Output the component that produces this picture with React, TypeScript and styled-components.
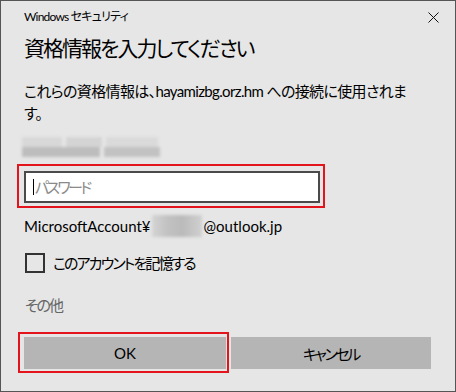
import React from "react";
import styled, { createGlobalStyle } from "styled-components";

const Global = createGlobalStyle`
  html, body { margin: 0; padding: 0; background: #e6e6e6; }
  * { box-sizing: border-box; }
  body {
    font-family: Lato, "Noto Sans CJK JP", sans-serif;
    color: #000;
  }
`;

const Window = styled.div`
  width: 456px;
  height: 392px;
  border: 1px solid #555;
  background: #e6e6e6;
  display: flex;
  flex-direction: column;
  font-feature-settings: "palt";
`;

const TitleBar = styled.div`
  height: 31px;
  display: flex;
  align-items: center;
  justify-content: space-between;
  padding-left: 23px;
`;

const TitleText = styled.span`
  font-size: 12px;
  line-height: 16px;
  margin-top: 1px;
  letter-spacing: -0.8px;
`;

const CloseButton = styled.div`
  width: 46px;
  height: 31px;
  display: flex;
  align-items: center;
  justify-content: center;
  padding-left: 2px;
  padding-top: 2px;
`;

const Content = styled.div`
  display: flex;
  flex-direction: column;
  align-items: flex-start;
  padding: 0 23px;
`;

const Heading = styled.h1`
  margin: 2px 0 0;
  font-size: 21px;
  line-height: 28px;
  font-weight: 400;
  letter-spacing: -2px;
`;

const Body = styled.p`
  margin: 18px 0 0;
  font-size: 15px;
  line-height: 22px;
  letter-spacing: -0.65px;
`;

const BlurBox = styled.div`
  margin-top: 13px;
  margin-left: -2px;
  width: 136px;
  height: 20px;
  display: grid;
  grid-template-rows: 10px 10px;
  filter: blur(1.5px);
`;

const BlurRow = styled.div`
  display: flex;
  gap: 4px;
`;

const BlurBlock = styled.div<{ $w: number; $c: string }>`
  width: ${(p) => p.$w}px;
  height: 100%;
  background: ${(p) => p.$c};
`;

const Highlight = styled.div<{ $pad: string; $ml: number; $mt: number }>`
  border: 2px solid #e3141c;
  padding: ${(p) => p.$pad};
  margin-left: ${(p) => p.$ml}px;
  margin-top: ${(p) => p.$mt}px;
`;

const Field = styled.div`
  width: 296px;
  height: 32px;
  border: 2px solid #4a4a4a;
  background: #fff;
  display: flex;
  align-items: center;
  padding-left: 7px;
`;

const Caret = styled.span`
  width: 1px;
  height: 16px;
  background: #000;
  margin-right: 1px;
`;

const Placeholder = styled.span`
  font-size: 15px;
  line-height: 20px;
  color: #8a8a8a;
  letter-spacing: -2.6px;
`;

const Account = styled.div`
  margin-top: 7px;
  font-size: 15px;
  line-height: 20px;
  display: flex;
  align-items: center;
`;

const AccountBlur = styled.span`
  display: inline-flex;
  width: 50px;
  height: 22px;
  margin: 0 2px 0 1px;
  filter: blur(1.5px);
  background: linear-gradient(90deg, #d4d4d4 0%, #c2c2c2 30%, #bababa 60%, #d0d0d0 100%);
`;

const CheckRow = styled.label`
  margin-top: 16px;
  display: flex;
  align-items: center;
  gap: 8px;
  font-size: 15px;
  line-height: 20px;
  margin-left: 1px;
  letter-spacing: -1.9px;
`;

const CheckBox = styled.span`
  width: 20px;
  height: 20px;
  border: 2px solid #333;
`;

const Other = styled.div`
  margin-top: 22px;
  margin-left: 1px;
  font-size: 15px;
  line-height: 20px;
  color: #666;
  letter-spacing: -2px;
`;

const ButtonRow = styled.div`
  align-self: stretch;
  display: flex;
  align-items: flex-start;
`;

const Button = styled.button<{ $w?: number }>`
  ${(p) => (p.$w ? `width: ${p.$w}px;` : "flex: 1;")}
  height: 32px;
  border: none;
  background: #b5b5b5;
  font-family: inherit;
  font-size: 15px;
  color: #000;
  padding: 0;
  font-feature-settings: "palt";
`;

const CancelButton = styled(Button)`
  margin-left: 2px;
  margin-top: 22px;
  margin-right: 1px;
  letter-spacing: -2.4px;
`;

export default function App() {
  return (
    <>
      <Global />
      <Window>
        <TitleBar>
          <TitleText>Windows セキュリティ</TitleText>
          <CloseButton>
            <svg width="11" height="11" viewBox="0 0 11 11">
              <path d="M0.5 0.5 L10.5 10.5 M10.5 0.5 L0.5 10.5" stroke="#111" strokeWidth="1" />
            </svg>
          </CloseButton>
        </TitleBar>
        <Content>
          <Heading>資格情報を入力してください</Heading>
          <Body>
            これらの資格情報は、hayamizbg.orz.hm への接続に使用されま
            <br />
            す。
          </Body>
          <BlurBox>
            <BlurRow>
              <BlurBlock $w={40} $c="#d8d8d8" />
              <BlurBlock $w={36} $c="#d4d4d4" />
              <BlurBlock $w={52} $c="#dadada" />
            </BlurRow>
            <BlurRow>
              <BlurBlock $w={78} $c="#bdbdbd" />
              <BlurBlock $w={56} $c="#c2c2c2" />
            </BlurRow>
          </BlurBox>
          <Highlight $pad="5px 3px 3px 5px" $ml={-7} $mt={7}>
            <Field>
              <Caret />
              <Placeholder>パスワード</Placeholder>
            </Field>
          </Highlight>
          <Account>
            MicrosoftAccount¥
            <AccountBlur />
            @outlook.jp
          </Account>
          <CheckRow>
            <CheckBox />
            このアカウントを記憶する
          </CheckRow>
          <Other>その他</Other>
          <ButtonRow>
            <Highlight $pad="3px 1px 2px 4px" $ml={-6} $mt={17}>
              <Button $w={202}>OK</Button>
            </Highlight>
            <CancelButton>キャンセル</CancelButton>
          </ButtonRow>
        </Content>
      </Window>
    </>
  );
}
